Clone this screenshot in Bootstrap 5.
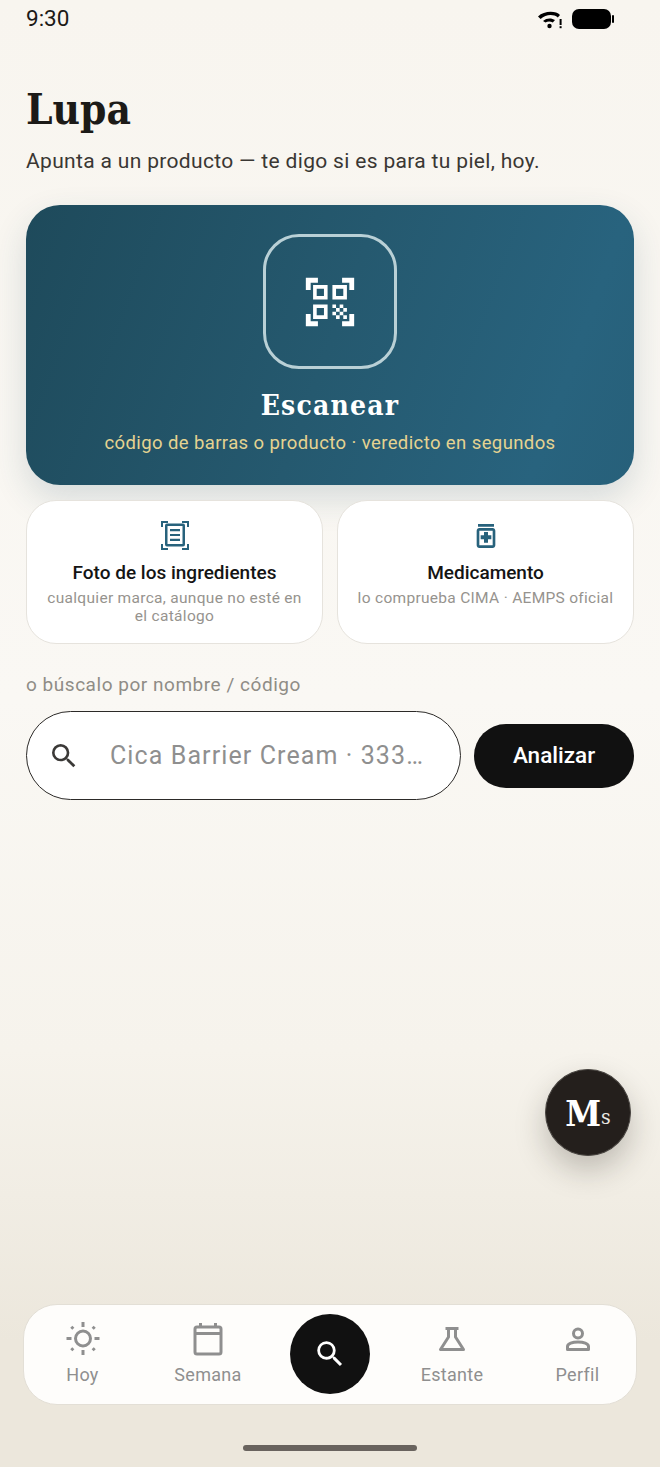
<!DOCTYPE html>
<html lang="es">
<head>
  <meta charset="UTF-8" />
  <meta name="viewport" content="width=device-width, initial-scale=1" />
  <title>Lupa</title>
  <link href="https://cdn.jsdelivr.net/npm/bootstrap@5.3.3/dist/css/bootstrap.min.css" rel="stylesheet">
  <style>
    body { font-family: Roboto, sans-serif; background: #f8f5ef; }
    .pantalla {
      width: 660px; height: 1467px; overflow: hidden; position: relative;
      background: linear-gradient(180deg, #f8f5ef 0, #faf8f4 700px, #f6f3ec 1050px, #ece7dc 1340px, #ece7dc 100%);
    }
    .barra-estado { height: 38px; padding: 0 46px 0 26px; font-size: 22.5px; color: #1c1a17; }
    .titulo { font-family: "DejaVu Serif Condensed", "DejaVu Serif", serif; font-weight: 700; font-size: 42px; line-height: 52px; color: #1c1a17; margin: 46px 0 0 26px; }
    .subtitulo { font-size: 21px; line-height: 28px; letter-spacing: .33px; color: #3a3733; margin: 11px 0 0 26px; }
    .escaner {
      height: 280px; margin: 30px 26px 0; border-radius: 34px; color: #fff; padding-top: 29px;
      background: linear-gradient(110deg, #1e4a5b 0%, #25596f 50%, #28637e 85%, #27607a 100%);
      box-shadow: 0 14px 34px rgba(31, 74, 92, .16);
    }
    .escaner-marco { width: 134px; height: 135px; border: 3px solid #b9d0d6; border-radius: 36px; }
    .escaner-titulo { font-family: "DejaVu Serif Condensed", "DejaVu Serif", serif; font-weight: 700; font-size: 28px; line-height: 38px; letter-spacing: 1.2px; margin-top: 18px; }
    .escaner-sub { font-size: 18.5px; line-height: 24px; letter-spacing: .4px; color: #e5d391; margin-top: 6px; }
    .fila-tarjetas { margin: 15px 26px 0; gap: 14px; }
    .tarjeta-op {
      width: 297px; height: 144px; background: #fff; border: 1.5px solid #e6e3dd; border-radius: 30px;
      padding-top: 19px; text-align: center;
    }
    .tarjeta-op svg { fill: #27627c; display: block; margin: 0 auto; }
    .op-titulo { font-size: 19px; line-height: 24px; font-weight: 500; color: #141414; margin-top: 9px; }
    .op-sub { font-size: 15.5px; line-height: 18px; letter-spacing: .3px; color: #96938e; margin-top: 4px; padding: 0 16px; }
    .busca-etiqueta { font-size: 19px; line-height: 24px; letter-spacing: .53px; color: #8f8c86; margin: 29px 0 0 26px; }
    .busca-fila { margin: 14px 26px 0; gap: 13px; }
    .busca-campo { width: 435px; height: 89px; border: 1.5px solid #2c2a28; border-radius: 45px; background: #fff; padding-left: 21px; }
    .busca-campo svg { fill: #3b3937; }
    .busca-texto { font-size: 25px; letter-spacing: 1.1px; color: #8f8f8f; margin-left: 30px; }
    .btn-analizar { width: 160px; height: 64px; border-radius: 32px; background: #111; border: 0; color: #fff; font-size: 22.5px; font-weight: 500; }
    .btn-analizar:hover { background: #111; color: #fff; }
    .burbuja {
      position: absolute; left: 545px; top: 1069px; width: 86px; height: 87px; border-radius: 50%;
      background: #241f1c; border: 1px solid #4a4642; color: #fff; font-family: "DejaVu Serif Condensed", "DejaVu Serif", serif;
      box-shadow: 0 14px 30px rgba(40, 34, 28, .25);
    }
    .burbuja b { font-size: 36px; line-height: 1; }
    .burbuja span { font-size: 21px; line-height: 1; margin-top: 9px; color: #e9e7e3; }
    .menu-inferior {
      position: absolute; left: 23px; top: 1304px; width: 614px; height: 101px; background: #fefdfb;
      border: 1px solid #e3dfd6; border-radius: 34px;
      display: grid; grid-template-columns: 117px 134px 110px 134px 117px; align-items: start;
    }
    .menu-item { text-align: center; font-size: 18px; line-height: 24px; letter-spacing: .3px; color: #8f8f8f; padding-top: 14px; }
    .menu-item svg { display: block; margin: 0 auto 4px; height: 40px; width: 40px; fill: none; stroke: #8f8f8f; stroke-width: 3; }
    .menu-centro { width: 80px; height: 80px; border-radius: 50%; background: #111; margin: 9px auto 0; }
    .menu-centro svg { fill: #fff; }
    .barra-inicio { position: absolute; left: 243px; top: 1445px; width: 174px; height: 6px; border-radius: 3px; background: #69635e; }
  </style>
</head>
<body>
  <div class="pantalla">
    <div class="barra-estado d-flex align-items-center justify-content-between">
      <span>9:30</span>
      <span class="d-flex align-items-center gap-2">
        <svg width="28" height="20" viewBox="0 0 28 20"><path d="M2 7.500C8 1.500 20 1.500 24 6l-2.200 2.400C17.500 5 10 5 4.600 10zM7 12c3.500-3.200 8.500-3.200 12-1l-2.200 2.400c-2.400-1.300-5-1.300-7.300 0z" fill="#000"/><circle cx="13.500" cy="17" r="2.200" fill="#000"/><rect x="23.600" y="10" width="2" height="6" fill="#000"/><rect x="23.600" y="17.200" width="2" height="2" fill="#000"/></svg>
        <svg width="42" height="20" viewBox="0 0 42 20"><rect x="0" y="0" width="39" height="20" rx="7" fill="#000"/><rect x="40" y="6" width="2" height="8" rx="1" fill="#000"/></svg>
      </span>
    </div>

    <h1 class="titulo">Lupa</h1>
    <p class="subtitulo mb-0">Apunta a un producto — te digo si es para tu piel, hoy.</p>

    <div class="escaner text-center">
      <div class="escaner-marco mx-auto d-flex align-items-center justify-content-center">
        <svg width="58" height="58" viewBox="0 0 24 24" fill="#fff"><path d="M9.500 6.500v3h-3v-3h3M11 5H5v6h6V5zm-1.500 9.500v3h-3v-3h3M11 13H5v6h6v-6zm6.500-6.500v3h-3v-3h3M19 5h-6v6h6V5zm-6 8h1.500v1.500H13V13zm1.500 1.500H16V16h-1.500v-1.500zM16 13h1.500v1.500H16V13zm-3 3h1.500v1.500H13V16zm1.500 1.500H16V19h-1.500v-1.500zM16 16h1.500v1.500H16V16zm1.500-1.500H19V16h-1.500v-1.500zm0 3H19V19h-1.500v-1.500zM22 7h-2V4h-3V2h5v5zm0 15v-5h-2v3h-3v2h5zM2 22h5v-2H4v-3H2v5zM2 2v5h2V4h3V2H2z"/></svg>
      </div>
      <div class="escaner-titulo">Escanear</div>
      <div class="escaner-sub">código de barras o producto · veredicto en segundos</div>
    </div>

    <div class="fila-tarjetas d-flex">
      <div class="tarjeta-op">
        <svg width="32" height="32" viewBox="0 0 32 32"><path d="M2 1h7v2H4v4H2zM23 1h7v6h-2V3h-5zM2 24h2v4h5v2H2zM28 24h2v6h-7v-2h5z"/><path fill-rule="evenodd" d="M8 3.500h16a2 2 0 0 1 2 2v19a2 2 0 0 1-2 2H8a2 2 0 0 1-2-2v-19a2 2 0 0 1 2-2zm.5 2.500v18h15V6z"/><path d="M11 9h10v2.200H11zM11 13.900h10v2.200H11zM11 18.800h10V21H11z"/></svg>
        <div class="op-titulo">Foto de los ingredientes</div>
        <div class="op-sub">cualquier marca, aunque no esté en el catálogo</div>
      </div>
      <div class="tarjeta-op">
        <svg width="32" height="32" viewBox="0 0 24 24"><path d="M6 3h12v2H6V3zM17 6H7C5.900 6 5 6.900 5 8v11c0 1.100.9 2 2 2h10c1.100 0 2-.9 2-2V8C19 6.900 18.100 6 17 6zM17 19H7V8h10V19zM10.500 17h3v-2.500H16v-3h-2.500V9h-3v2.500H8v3h2.500V17z"/></svg>
        <div class="op-titulo">Medicamento</div>
        <div class="op-sub">lo comprueba CIMA · AEMPS oficial</div>
      </div>
    </div>

    <div class="busca-etiqueta">o búscalo por nombre / código</div>
    <div class="busca-fila d-flex align-items-center">
      <div class="busca-campo d-flex align-items-center">
        <svg width="32" height="32" viewBox="0 0 24 24"><path d="M15.500 14h-.79l-.28-.27A6.470 6.470 0 0 0 16 9.500 6.500 6.500 0 1 0 9.500 16c1.610 0 3.090-.59 4.230-1.570l.27.28v.79l5 4.990L20.490 19l-4.990-5zm-6 0C7.010 14 5 11.990 5 9.500S7.010 5 9.500 5 14 7.010 14 9.500 11.990 14 9.500 14z"/></svg>
        <span class="busca-texto">Cica Barrier Cream · 333…</span>
      </div>
      <button class="btn btn-analizar" type="button">Analizar</button>
    </div>

    <div class="burbuja d-flex align-items-center justify-content-center"><b>M</b><span>s</span></div>

    <nav class="menu-inferior">
      <div class="menu-item">
        <svg viewBox="0 0 40 40"><circle cx="20" cy="19.500" r="7.500"/><path d="M20 3v5M20 31v5M3.500 19.500h5M31.500 19.500h5M8.300 7.800l2 2M29.700 29.200l2 2M8.300 31.200l2-2M29.700 9.800l2-2"/></svg>
        Hoy
      </div>
      <div class="menu-item">
        <svg viewBox="0 0 40 40"><rect x="7" y="8" width="26" height="27" rx="2"/><path d="M7 14.500h26M12.500 4v4M27.500 4v4"/></svg>
        Semana
      </div>
      <div class="menu-centro d-flex align-items-center justify-content-center">
        <svg width="34" height="34" viewBox="0 0 24 24"><path d="M15.500 14h-.79l-.28-.27A6.470 6.470 0 0 0 16 9.500 6.500 6.500 0 1 0 9.500 16c1.610 0 3.090-.59 4.230-1.570l.27.28v.79l5 4.990L20.490 19l-4.990-5zm-6 0C7.010 14 5 11.990 5 9.500S7.010 5 9.500 5 14 7.010 14 9.500 11.990 14 9.500 14z"/></svg>
      </div>
      <div class="menu-item">
        <svg viewBox="0 0 40 40"><path d="M13.500 9.500h13M16.500 9.500v8.500L8.500 30.500h23L23.500 18V9.500" stroke-linejoin="round"/></svg>
        Estante
      </div>
      <div class="menu-item">
        <svg viewBox="0 0 40 40"><circle cx="20" cy="14.500" r="4.500"/><path d="M9.500 30.500v-3c0-2.800 5-4.500 10.500-4.500s10.500 1.700 10.500 4.500v3z" stroke-linejoin="round"/></svg>
        Perfil
      </div>
    </nav>

    <div class="barra-inicio"></div>
  </div>
  <script src="https://cdn.jsdelivr.net/npm/bootstrap@5.3.3/dist/js/bootstrap.bundle.min.js"></script>
</body>
</html>
